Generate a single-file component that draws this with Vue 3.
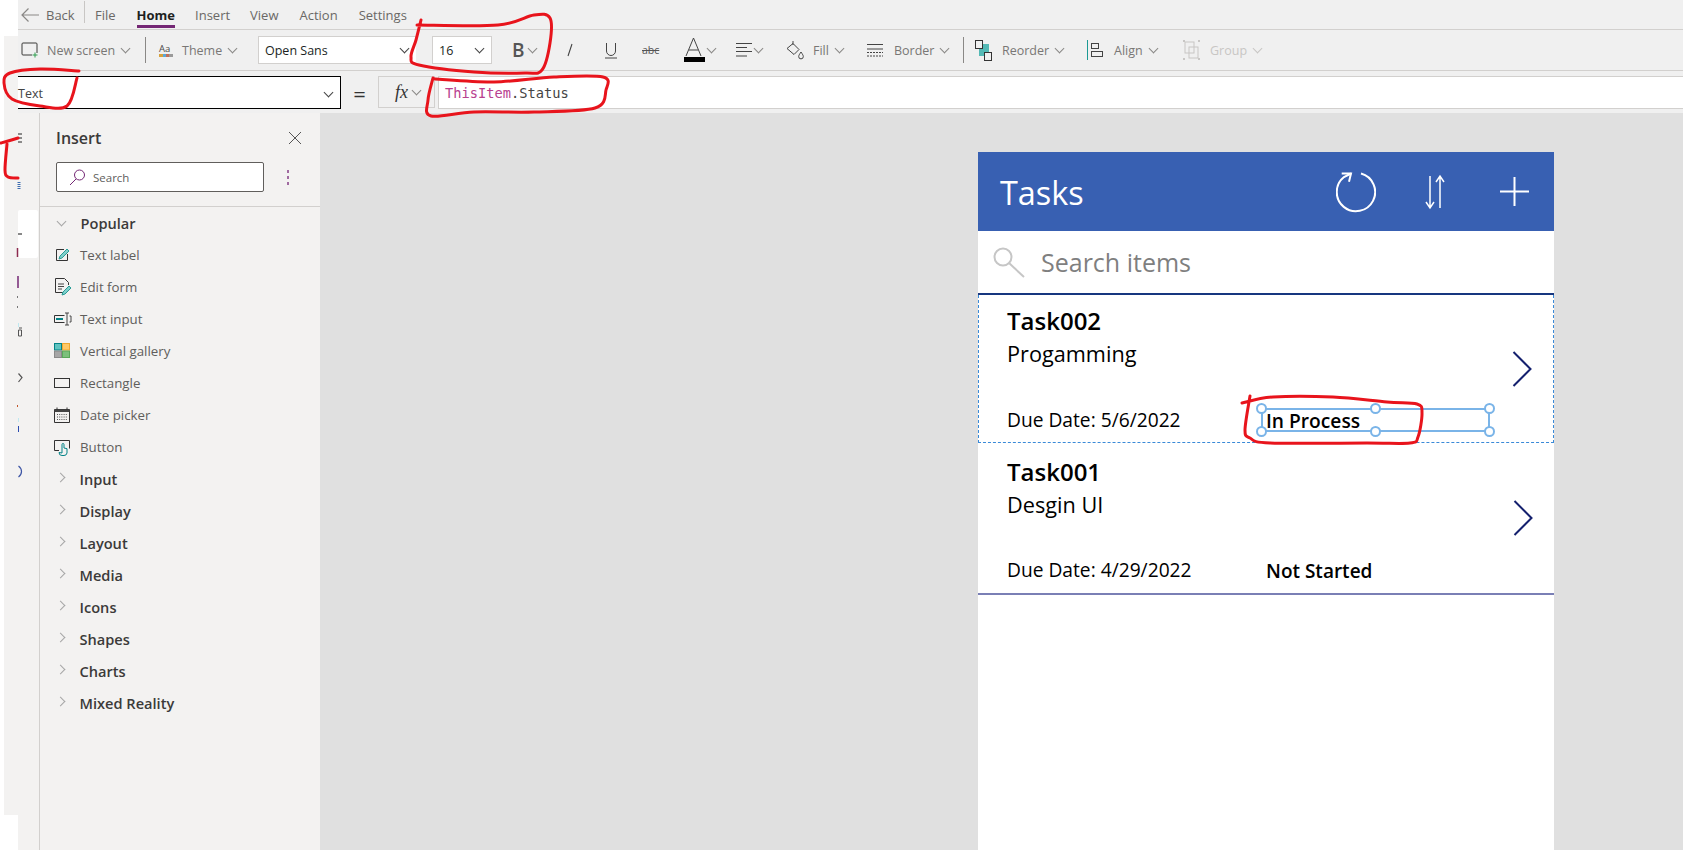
<template>
  <div class="page">
    <header class="head">
      <div class="head-edge"><div class="head-edge-fill"></div></div>
      <div class="head-body">
        <nav class="menu">
          <div class="back">
            <svg width="18" height="14" viewBox="0 0 18 14"><path d="M1 7H18M7.500 .5L1 7l6.500 6.500" fill="none" stroke="#8a8886" stroke-width="1.200" /></svg>
            <span>Back</span>
          </div>
          <i class="menu-sep"></i>
          <span
            v-for="m in menuItems"
            :key="m"
            class="menu-item"
            :class="{ active: m === 'Home', file: m === 'File' }"
          >{{ m }}</span>
        </nav>

        <div class="toolbar">
          <div class="tool tool-new">
            <svg width="18" height="16" viewBox="0 0 18 16">
              <path d="M11 13H2a1 1 0 0 1-1-1V2a1 1 0 0 1 1-1h13a1 1 0 0 1 1 1v9" fill="none" stroke="#3b3a39" />
              <path d="M14 10.500v5M11.500 13h5" stroke="#2e9e4f" />
            </svg>
            <span>New screen</span><i class="chev"></i>
          </div>
          <i class="tool-sep"></i>
          <div class="tool">
            <svg class="theme-icon" width="16" height="16" viewBox="0 0 16 16">
              <text x="1" y="10" font-size="9.500" font-family="Open Sans, sans-serif" fill="#4a4a4a">Aa</text>
              <rect x="1" y="12" width="4" height="3" fill="#d8a23c" />
              <rect x="5" y="12" width="3" height="3" fill="#5aa7d8" />
              <rect x="8" y="12" width="3" height="3" fill="#c0705a" />
              <rect x="11" y="12" width="4" height="3" fill="#9a9a9a" />
            </svg>
            <span>Theme</span><i class="chev"></i>
          </div>
          <div class="field field-font"><span>Open Sans</span><i class="chev dark"></i></div>
          <div class="field field-size"><span>16</span><i class="chev dark"></i></div>
          <div class="tool tool-bold"><b>B</b><i class="chev chev-b"></i></div>
          <div class="tool tool-italic">
            <svg width="10" height="16" viewBox="0 0 10 16"><path d="M7 2L3 14" stroke="#444" stroke-width="1.100" /></svg>
          </div>
          <div class="tool">
            <svg width="14" height="17" viewBox="0 0 14 17"><path d="M2.500 1v8a4.500 4.500 0 0 0 9 0V1M1 16h12" fill="none" stroke="#444" /></svg>
          </div>
          <div class="tool">
            <span class="strike">abc</span>
          </div>
          <div class="tool">
            <svg width="22" height="24" viewBox="0 0 22 24">
              <path d="M2 18L9.500 0 17 18M5 12h9" fill="none" stroke="#444" />
              <rect x="0" y="19" width="21" height="5" fill="#000" />
            </svg>
            <i class="chev chev-tight"></i>
          </div>
          <div class="tool">
            <svg width="17" height="16" viewBox="0 0 17 16"><path d="M0 1.500h16M0 5.500h11M0 9.500h16M0 14h11" stroke="#444" /></svg>
            <i class="chev chev-tight"></i>
          </div>
          <div class="tool">
            <svg width="18" height="20" viewBox="0 0 18 20">
              <path d="M7 1v4M7 3.500l6 6-5 5-7-6z" fill="none" stroke="#444" />
              <path d="M15 12c1.600 2.500 2.300 3.400 2.300 4.600a2.300 2.300 0 0 1-4.600 0c0-1.200.7-2.100 2.300-4.600z" fill="none" stroke="#444" />
            </svg>
            <span class="ml9">Fill</span><i class="chev"></i>
          </div>
          <div class="tool">
            <svg width="16" height="14" viewBox="0 0 16 14">
              <path d="M0 1.500h16M0 6h16" stroke="#444" /><path d="M0 9.500h16M0 13h16" stroke="#444" stroke-dasharray="2 1" />
            </svg>
            <span class="ml11">Border</span><i class="chev"></i>
          </div>
          <i class="tool-sep"></i>
          <div class="tool">
            <svg width="17" height="21" viewBox="0 0 17 21">
              <rect x="4" y="4" width="10" height="12" fill="#54b9b5" />
              <rect x=".5" y=".5" width="7" height="8" fill="#f0f0f0" stroke="#333" />
              <rect x="9.500" y="12.500" width="7" height="8" fill="#f0f0f0" stroke="#333" />
            </svg>
            <span class="ml10">Reorder</span><i class="chev"></i>
          </div>
          <div class="tool">
            <svg width="16" height="20" viewBox="0 0 16 20">
              <path d="M.5 0v20" stroke="#1b9a94" />
              <rect x="4.500" y="3.500" width="7" height="5" fill="none" stroke="#444" />
              <rect x="4.500" y="11.500" width="11" height="5" fill="none" stroke="#444" />
            </svg>
            <span class="ml11">Align</span><i class="chev"></i>
          </div>
          <div class="tool disabled">
            <svg width="17" height="20" viewBox="0 0 17 20" fill="none" stroke="#c8c6c4">
              <rect x="2" y="2" width="9" height="11" /><rect x="6" y="7" width="9" height="11" />
              <path d="M0 1h2M15 1h2M0 19h2M15 19h2" stroke-width="2" />
            </svg>
            <span class="ml10">Group</span><i class="chev"></i>
          </div>
        </div>

        <div class="formula">
          <div class="name-box"><span>Text</span><i class="chev dark"></i></div>
          <span class="equals">=</span>
          <div class="fx-box"><em>fx</em><i class="chev"></i></div>
          <div class="fx-input"><span class="kw">ThisItem</span>.Status</div>
        </div>
      </div>
    </header>

    <main class="main">
      <svg class="rail" width="39" height="737" viewBox="0 113 39 737">
        <rect x="4" y="113" width="35" height="737" fill="#f3f2f1" />
        <rect x="4" y="815" width="14" height="35" fill="#fff" />
        <rect x="18" y="210" width="20" height="48" rx="2" fill="#fff" />
        <path d="M18 134h4M18 138h4M18 142h4" stroke="#222" />
        <path d="M19 182v8" stroke="#3c6cb0" stroke-width="3" stroke-dasharray="1 1" />
        <path d="M18 234h4" stroke="#888" stroke-width="2" />
        <path d="M17.500 248v9" stroke="#8c2b4f" stroke-width="1.500" />
        <path d="M18 276v12" stroke="#742774" stroke-width="1.500" />
        <path d="M17.500 296v2M17.500 306v2" stroke="#777" />
        <path d="M18.500 323v4" stroke="#bfe8f0" />
        <path d="M18.500 330h3v6h-3zM19 328h3" fill="none" stroke="#555" />
        <path d="M18.500 373.500l3.500 4-3.500 4.500" fill="none" stroke="#555" stroke-width="1.200" />
        <path d="M17.500 405v2" stroke="#c2572b" />
        <path d="M18.500 418v4" stroke="#bfe8f0" /><path d="M18.500 426v6" stroke="#2b4bb0" />
        <path d="M18.500 466c4 3 4 8 0 11" fill="none" stroke="#3d55a5" stroke-width="1.200" />
      </svg>

      <aside class="panel">
        <div class="panel-head">
          <span>Insert</span>
          <svg width="14" height="14" viewBox="0 0 14 14"><path d="M1 1l12 12M13 1L1 13" stroke="#555" /></svg>
        </div>
        <div class="panel-search-row">
          <div class="panel-search">
            <svg width="17" height="17" viewBox="0 0 17 17" fill="none"><circle cx="10.500" cy="6" r="5" stroke="#742774" /><path d="M7 10L1 16" stroke="#742774" /></svg>
            <span>Search</span>
          </div>
          <div class="dots"><i></i><i></i><i></i></div>
        </div>
        <div class="panel-list">
          <div class="group"><i class="chev light"></i><span>Popular</span></div>
          <div v-for="it in popular" :key="it.label" class="pitem">
            <svg width="18" height="18" viewBox="0 0 18 18" fill="none">
              <template v-if="it.icon === 'label'">
                <path d="M10 3.500H2.500v11h11V8" stroke="#333" />
                <path d="M5 13l1-3 7-7 2 2-7 7z" stroke="#2a9d97" fill="#7fd0cc" />
              </template>
              <template v-else-if="it.icon === 'form'">
                <path d="M10 14.500H1.500v-14h9l4 4V7" stroke="#333" />
                <path d="M4 6h6M4 8.500h6M4 11h4" stroke="#444" />
                <path d="M8 17l1-3 6-6 2 2-6 6z" stroke="#2a9d97" fill="#7fd0cc" />
              </template>
              <template v-else-if="it.icon === 'input'">
                <path d="M10.500 5.500H.5v7h10" stroke="#333" />
                <path d="M2 9h7" stroke="#038387" stroke-width="2" />
                <path d="M13 3v12M11 3h4M11 15h4M15.500 6h1.500v6h-1.500" stroke="#444" />
              </template>
              <template v-else-if="it.icon === 'gallery'">
                <rect x=".5" y="1.500" width="7" height="6.500" fill="#5fc3c0" stroke="#038387" />
                <rect x="8.500" y="1.500" width="7" height="6.500" fill="#ffc966" stroke="#f0a830" />
                <rect x=".5" y="9" width="7" height="6.500" fill="#a6a6a6" stroke="#8a8a8a" />
                <rect x="8.500" y="9" width="7" height="6.500" fill="#7cc07c" stroke="#5aa85a" />
              </template>
              <rect v-else-if="it.icon === 'rect'" x=".5" y="4.500" width="15" height="9" stroke="#333" />
              <template v-else-if="it.icon === 'date'">
                <path d="M.5 3.500h15v13H.5z" stroke="#333" /><path d="M.5 3.500h15v2.500H.5z" fill="#444" />
                <path d="M3 1.500v2M13 1.500v2" stroke="#333" />
                <path d="M3 8.500h10M3 11h10M3 13.500h10" stroke="#555" stroke-dasharray="1 1.200" />
              </template>
              <template v-else>
                <path d="M5 12.500H.5v-10h15v8" stroke="#333" />
                <path d="M8 15V6.500a1 1 0 0 1 2 0V10l3 .7V15a3 3 0 0 1-3 2.500H8a3 3 0 0 1-3-3z" stroke="#038387" fill="#f3f2f1" />
              </template>
            </svg>
            <span>{{ it.label }}</span>
          </div>
          <div v-for="g in groups" :key="g" class="group"><i class="chev light side"></i><span>{{ g }}</span></div>
        </div>
      </aside>

      <section class="canvas">
        <div class="phone">
          <div class="app-head">
            <span class="app-title">Tasks</span>
            <svg class="ic-reload" width="40" height="42" viewBox="0 0 40 42" fill="none" stroke="#fff" stroke-width="2">
              <path d="M25 2.500A19.200 19.200 0 1 1 8 6L15 2.500" />
              <path d="M5.700 2.500H15L13 10.700" />
            </svg>
            <svg class="ic-sort" width="24" height="36" viewBox="0 0 24 36" fill="none" stroke="#fff" stroke-width="1.500">
              <path d="M7 2v32M3 28l4 6 4-6" /><path d="M17 34V2M13 8l4-6 4 6" />
            </svg>
            <svg class="ic-plus" width="31" height="31" viewBox="0 0 31 31" stroke="#fff" stroke-width="2"><path d="M15.500 1v29M1 15.500h29" /></svg>
          </div>
          <div class="app-search">
            <svg width="33" height="31" viewBox="0 0 33 31" fill="none" stroke="#c6c6c6" stroke-width="2">
              <circle cx="10" cy="10" r="8.500" /><path d="M16 16l15 14" />
            </svg>
            <span>Search items</span>
          </div>
          <div class="gallery">
            <div
              v-for="(t, i) in tasks"
              :key="t.title"
              class="task"
              :class="{ selected: i === 0 }"
            >
              <div class="task-body">
                <div class="task-title">{{ t.title }}</div>
                <div class="task-sub">{{ t.sub }}</div>
                <div class="task-foot">
                  <span class="task-due">{{ t.due }}</span>
                  <span class="task-status" :class="{ picked: i === 0 }">
                    {{ t.status }}
                    <template v-if="i === 0">
                      <i v-for="h in handles" :key="h" class="handle" :class="h"></i>
                    </template>
                  </span>
                </div>
              </div>
              <svg class="task-go" width="20" height="36" viewBox="0 0 20 36" fill="none" stroke="#14206e" stroke-width="2"><path d="M1.500 1L18.500 18 1.500 35" /></svg>
            </div>
          </div>
        </div>
      </section>
    </main>

    <svg class="ink" width="1683" height="850" viewBox="0 0 1683 850" fill="none" stroke="#e8141c" stroke-width="3" stroke-linecap="round" stroke-linejoin="round">
      <path v-for="(d, i) in inkPaths" :key="i" :d="d" />
    </svg>
  </div>
</template>

<script setup>
const menuItems = ['File', 'Home', 'Insert', 'View', 'Action', 'Settings']

const popular = [
  { label: 'Text label', icon: 'label' },
  { label: 'Edit form', icon: 'form' },
  { label: 'Text input', icon: 'input' },
  { label: 'Vertical gallery', icon: 'gallery' },
  { label: 'Rectangle', icon: 'rect' },
  { label: 'Date picker', icon: 'date' },
  { label: 'Button', icon: 'button' }
]

const groups = ['Input', 'Display', 'Layout', 'Media', 'Icons', 'Shapes', 'Charts', 'Mixed Reality']

const tasks = [
  { title: 'Task002', sub: 'Progamming', due: 'Due Date: 5/6/2022', status: 'In Process' },
  { title: 'Task001', sub: 'Desgin UI', due: 'Due Date: 4/29/2022', status: 'Not Started' }
]

const handles = ['tl', 'tm', 'tr', 'bl', 'bm', 'br']

// hand drawn marks, smoothed through the points
function smooth(pts) {
  let d = `M${pts[0][0]} ${pts[0][1]}`
  for (let i = 0; i < pts.length - 1; i++) {
    const p0 = pts[i - 1] || pts[i]
    const p1 = pts[i]
    const p2 = pts[i + 1]
    const p3 = pts[i + 2] || p2
    const c1 = [p1[0] + (p2[0] - p0[0]) / 6, p1[1] + (p2[1] - p0[1]) / 6]
    const c2 = [p2[0] - (p3[0] - p1[0]) / 6, p2[1] - (p3[1] - p1[1]) / 6]
    d += `C${c1[0]} ${c1[1]} ${c2[0]} ${c2[1]} ${p2[0]} ${p2[1]}`
  }
  return d
}

const inkPaths = [
  [[421, 20], [416, 40], [411, 57], [419, 65], [474, 72], [525, 73], [542, 70], [550, 43], [550, 18], [534, 15], [498, 25], [417, 25]],
  [[79, 71], [40, 69], [10, 73], [4, 83], [12, 99], [40, 106], [67, 106], [77, 78]],
  [[435, 79], [494, 82], [554, 77], [603, 77], [606, 90], [595, 108], [534, 112], [474, 112], [431, 116], [428, 100], [433, 78]],
  [[18, 138], [8, 141], [1, 143]],
  [[7, 144], [5, 170], [8, 177], [18, 178]],
  [[1242, 403], [1273, 397], [1333, 397], [1387, 402], [1417, 404], [1422, 413], [1418, 437], [1410, 443], [1367, 443], [1270, 443], [1250, 438], [1245, 430], [1250, 396]]
].map(smooth)
</script>

<style scoped>
.page {
  position: relative;
  width: 1683px;
  height: 850px;
  overflow: hidden;
  display: flex;
  flex-direction: column;
  background: #fff;
  font-family: "Open Sans", sans-serif;
  color: #605e5c;
}

i {
  font-style: normal;
}

.head {
  display: flex;
  height: 113px;
  flex: none;
}

.head-edge {
  width: 18px;
  flex: none;
  padding: 36px 0 0 4px;
  box-sizing: border-box;
}

.head-edge-fill {
  height: 100%;
  background: #f3f2f1;
}

.head-body {
  flex: 1;
  min-width: 0;
  background: #f0f0f0;
}

.chev {
  display: inline-block;
  width: 6px;
  height: 6px;
  margin: -3px 0 0 7px;
  border-right: 1px solid #8a8886;
  border-bottom: 1px solid #8a8886;
  transform: rotate(45deg);
  flex: none;
}

.chev.dark {
  border-color: #444;
}

.chev.light {
  border-color: #a6a6a6;
  margin: -4px 0 0 0;
}

.chev.light.side {
  transform: rotate(-45deg);
  margin: -4px 0 0 -1px;
}

.chev-tight {
  margin-left: 2px;
}

.chev-b {
  margin-left: 4px;
}

/* menu row */
.menu {
  height: 29px;
  display: flex;
  align-items: center;
  padding-left: 3px;
  border-bottom: 1px solid #d2d0ce;
  font-size: 13px;
  color: #6a6866;
}

.back {
  display: flex;
  align-items: center;
  gap: 7px;
  width: 63px;
}

.menu-sep {
  width: 1px;
  height: 22px;
  background: #c8c6c4;
  margin-top: -6px;
}

.menu-item {
  margin-left: 20px;
}

.menu-item:nth-last-child(-n+2) {
  margin-left: 21px;
}

.menu-item.file {
  margin-left: 10px;
}

.menu-item.active {
  margin-left: 21px;
  color: #201f1e;
  font-weight: 700;
  position: relative;
}

.menu-item.active::after {
  content: "";
  position: absolute;
  left: 0;
  right: 0;
  bottom: -4px;
  height: 3px;
  background: #742774;
}

/* toolbar */
.toolbar {
  height: 40px;
  display: grid;
  grid-template-columns: 127px 13px 100px 174px 70px 58px 44px 38px 42px 52px 50px 81px 96px 12px 112px 96px 1fr;
  align-items: center;
  border-bottom: 1px solid #d2d0ce;
  font-size: 12.5px;
  color: #797775;
}

.tool {
  display: flex;
  align-items: center;
}

.tool-new {
  padding-left: 3px;
}

.tool-new svg {
  margin-right: 8px;
}

.theme-icon {
  margin-right: 8px;
}

.tool-sep {
  width: 1px;
  height: 26px;
  background: #8a8886;
}

.ml9 {
  margin-left: 9px;
}

.ml10 {
  margin-left: 10px;
}

.ml11 {
  margin-left: 11px;
}

.field {
  height: 28px;
  box-sizing: border-box;
  display: flex;
  align-items: center;
  justify-content: space-between;
  padding: 0 8px 0 6px;
  background: #fff;
  border: 1px solid #d2d0ce;
  color: #201f1e;
}

.field-font {
  width: 158px;
  border-right: none;
}

.field-size {
  width: 60px;
}

.tool-bold {
  padding-left: 10px;
}

.tool-bold b {
  font-size: 19px;
  color: #555;
  font-weight: 600;
}

.tool-italic {
  padding-left: 5px;
}

.strike {
  color: #555;
  font-size: 10.5px;
  text-decoration: line-through;
}

.disabled {
  color: #c8c6c4;
}

.disabled .chev {
  border-color: #c8c6c4;
}

/* formula row */
.formula {
  display: flex;
  align-items: flex-start;
  padding-top: 5px;
  height: 43px;
  box-sizing: border-box;
  border-bottom: 1px solid #d2d0ce;
}

.name-box {
  width: 323px;
  height: 33px;
  box-sizing: border-box;
  flex: none;
  display: flex;
  align-items: center;
  justify-content: space-between;
  padding: 2px 8px 0 0;
  background: #fff;
  border: 1px solid #000;
  border-left: none;
  color: #444;
  font-size: 12.5px;
}

.equals {
  width: 37px;
  text-align: center;
  font-size: 22px;
  line-height: 34px;
  color: #333;
}

.fx-box {
  width: 57px;
  height: 32px;
  box-sizing: border-box;
  flex: none;
  display: flex;
  align-items: center;
  padding-left: 16px;
  border: 1px solid #d2d0ce;
}

.fx-box em {
  font-family: "Liberation Serif", serif;
  font-size: 18px;
  color: #333;
}

.fx-box .chev {
  margin-left: 5px;
}

.fx-input {
  flex: 1;
  height: 33px;
  margin-left: 3px;
  box-sizing: border-box;
  display: flex;
  align-items: center;
  padding-left: 6px;
  background: #fff;
  border: 1px solid #d2d0ce;
  border-right: none;
  font-family: "DejaVu Sans Mono", monospace;
  font-size: 13.7px;
  color: #444;
}

.kw {
  color: #b8418f;
}

/* main area */
.main {
  flex: 1;
  min-height: 0;
  display: flex;
}

.rail {
  flex: none;
  display: block;
}

.panel {
  width: 281px;
  flex: none;
  box-sizing: border-box;
  background: #f3f2f1;
  border-left: 1px solid #d2d0ce;
}

.panel-head {
  height: 49px;
  display: flex;
  align-items: center;
  justify-content: space-between;
  padding: 0 18px 0 16px;
  font-size: 16px;
  font-weight: 600;
  color: #3b3a39;
}

.panel-search-row {
  height: 44px;
  display: flex;
  padding-left: 16px;
  border-bottom: 1px solid #d2d0ce;
}

.panel-search {
  width: 208px;
  height: 30px;
  box-sizing: border-box;
  display: flex;
  align-items: center;
  gap: 7px;
  padding-left: 12px;
  background: #fff;
  border: 1px solid #605e5c;
  border-radius: 2px;
  font-size: 11.5px;
}

.dots {
  display: flex;
  flex-direction: column;
  gap: 3px;
  margin: 8px 0 0 23px;
}

.dots i {
  width: 2px;
  height: 3px;
  background: #a06aa0;
}

.group,
.pitem {
  height: 32px;
  display: flex;
  align-items: center;
  padding-left: 18px;
  color: #3b3a39;
}

.group {
  font-size: 14.6px;
  font-weight: 550;
}

.group span {
  margin-left: 15.5px;
}

.pitem {
  padding-left: 14px;
  font-size: 13.3px;
  color: #605e5c;
}

.pitem span {
  margin-left: 8px;
}

.canvas {
  flex: 1;
  min-width: 0;
  background: #e0e0e0;
  padding: 39px 0 0 658px;
  box-sizing: border-box;
}

.phone {
  width: 576px;
  height: 100%;
  background: #fff;
  display: flex;
  flex-direction: column;
}

.app-head {
  height: 79px;
  flex: none;
  display: flex;
  align-items: center;
  padding-left: 22px;
  background: #3860b2;
  color: #fff;
}

.app-title {
  font-size: 32.4px;
  width: 336px;
}

.ic-sort {
  margin-left: 47px;
}

.ic-plus {
  margin-left: 52px;
}

.app-search {
  height: 62px;
  flex: none;
  display: flex;
  align-items: center;
  padding-left: 15px;
  font-size: 25px;
  color: #7f7f7f;
}

.app-search span {
  margin-left: 15px;
}

.gallery {
  border-top: 2px solid #17367f;
}

.task {
  height: 152px;
  display: flex;
  align-items: center;
  box-sizing: border-box;
  border-bottom: 2px solid #7a7fb5;
  color: #000;
}

.task.selected {
  height: 148px;
  border-left: 1px dashed #3a8ad8;
  border-right: 1px dashed #3a8ad8;
  border-bottom: 1px dashed #3a8ad8;
}

.task-body {
  flex: 1;
  padding: 13px 0 0 29px;
  align-self: flex-start;
}

.selected .task-body {
  padding: 10px 0 0 28px;
}

.task-title {
  font-size: 24px;
  font-weight: 600;
  line-height: 32px;
}

.task-sub {
  font-size: 21.7px;
  line-height: 32px;
  margin-top: 1px;
}

.task-foot {
  display: flex;
  align-items: center;
  margin-top: 35px;
}

.selected .task-foot {
  margin-top: 36px;
}

.task-due {
  width: 254px;
  font-size: 19.2px;
}

.task-status {
  position: relative;
  font-size: 19px;
  font-weight: 600;
  padding-left: 5px;
  width: 229px;
  height: 24px;
  line-height: 26px;
  box-sizing: border-box;
}

.task-status.picked {
  font-weight: 550;
  font-size: 19.2px;
  outline: 2px solid #7ab4e8;
  outline-offset: -2px;
  line-height: 25px;
}

.handle {
  position: absolute;
  width: 11px;
  height: 11px;
  box-sizing: border-box;
  border: 2px solid #7ab4e8;
  border-radius: 50%;
  background: #fff;
}

.handle.tl { left: -5px; top: -5px; }
.handle.tm { left: 109px; top: -5px; }
.handle.tr { right: -5px; top: -5px; }
.handle.bl { left: -5px; bottom: -5px; }
.handle.bm { left: 109px; bottom: -5px; }
.handle.br { right: -5px; bottom: -5px; }

.task-go {
  flex: none;
  margin-right: 21px;
}

.ink {
  position: absolute;
  left: 0;
  top: 0;
  pointer-events: none;
}
</style>
